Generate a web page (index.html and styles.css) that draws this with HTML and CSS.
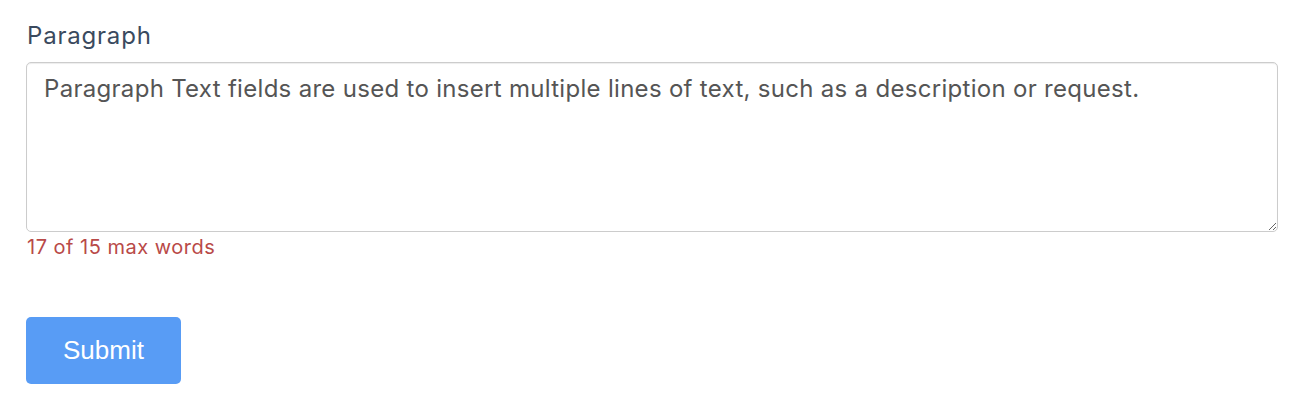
FILE: index.html
```html
<!DOCTYPE html>
<html>
<head>
<meta charset="utf-8">
<link rel="stylesheet" href="styles.css">
</head>
<body>
<form class="form">
  <div class="field">
    <label class="label" for="para">Paragraph</label>
    <textarea id="para" class="textarea">Paragraph Text fields are used to insert multiple lines of text, such as a description or request.</textarea>
    <div class="error">17 of 15 max words</div>
  </div>
  <button type="button" class="submit">Submit</button>
</form>
</body>
</html>
```

FILE: styles.css
```css
html, body {
  margin: 0;
  padding: 0;
  background: #fff;
}
.form {
  padding: 21px 22px 0 26px;
  font-family: Inter, "Noto Sans", sans-serif;
}
.field {
  display: flex;
  flex-direction: column;
}
.label {
  font-size: 24px;
  line-height: 30px;
  letter-spacing: 0.8px;
  color: #3a4a5e;
  margin-bottom: 11px;
  padding-left: 1px;
}
.textarea {
  box-sizing: border-box;
  width: 100%;
  height: 170px;
  margin: 0;
  padding: 11px 17px 10px;
  font-family: Inter, "Noto Sans", sans-serif;
  font-size: 24px;
  line-height: 30px;
  letter-spacing: 0.3px;
  color: #555;
  border: 1px solid #ccc;
  border-radius: 5px;
  box-shadow: inset 0 1px 1px rgba(0,0,0,.075);
  resize: vertical;
}
.error {
  margin-top: 3px;
  font-size: 20px;
  line-height: 24px;
  letter-spacing: 0.5px;
  color: #b94a48;
  padding-left: 1px;
}
.submit {
  display: block;
  margin-top: 58px;
  width: 155px;
  height: 67px;
  padding: 0;
  background: #589cf5;
  border: none;
  border-radius: 5px;
  color: #fff;
  font-family: "Liberation Sans", Arial, sans-serif;
  font-size: 26px;
  cursor: pointer;
}
```
